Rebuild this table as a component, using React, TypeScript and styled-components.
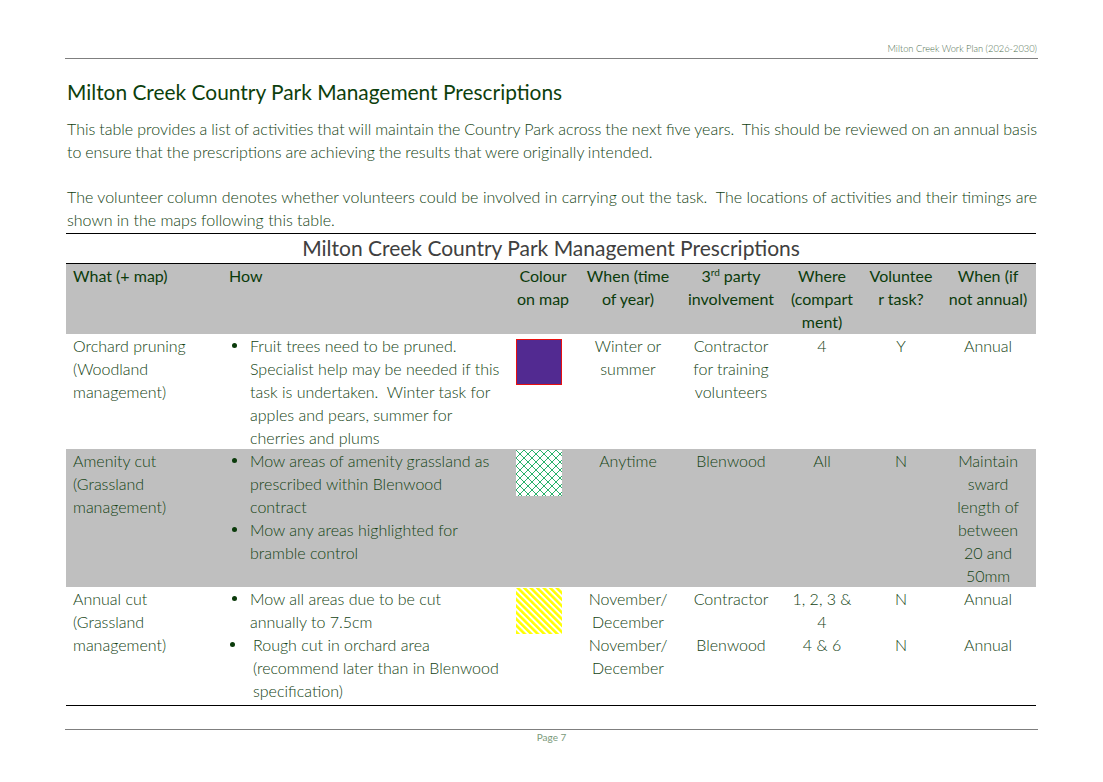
import React from 'react'
import styled, { createGlobalStyle } from 'styled-components'

const GlobalStyle = createGlobalStyle`
  html, body {
    margin: 0;
    padding: 0;
    background: #fff;
  }
  body {
    font-family: Lato, "Open Sans", sans-serif;
  }
`

const Page = styled.div`
  width: 1103px;
  height: 782px;
  box-sizing: border-box;
  padding: 43px 65px 0 65px;
  display: flex;
  flex-direction: column;
`

const RunningHead = styled.div`
  font-size: 9.3px;
  font-weight: 300;
  color: #4f6f4f;
  text-align: right;
  padding: 0 1px 4px 0;
  border-bottom: 1px solid #7f7f7f;
  line-height: 11px;
`

const Title = styled.h1`
  margin: 20px 0 0 2px;
  font-size: 20.9px;
  font-weight: 400;
  color: #0d3f0d;
  line-height: 26px;
`

const Para = styled.p`
  margin: ${props => props.$top || 0}px 1px 0 2px;
  font-size: 16px;
  font-weight: 300;
  line-height: 23px;
  color: #124212;
  text-align: justify;
  word-spacing: ${props => props.$tight ? '-0.5px' : 'normal'};
`

const Table = styled.table`
  margin: 2px 0 0 1px;
  width: 970px;
  border-collapse: collapse;
  table-layout: fixed;
  border-top: 1px solid #000;
  border-bottom: 1px solid #000;
`

const Caption = styled.th`
  font-size: 21px;
  font-weight: 400;
  color: #404040;
  text-align: center;
  line-height: 28px;
  padding: 0 0 1px 0;
  border-bottom: 1px solid #000;
`

const HeadCell = styled.th`
  background: #bfbfbf;
  font-size: 16px;
  font-weight: 400;
  color: #0b3b0b;
  line-height: 23px;
  text-align: ${props => props.$align || 'center'};
  vertical-align: top;
  padding: 0 ${props => props.$align === 'left' ? '2px 0 7px' : '0'};
  height: 70px;
`

const Row = styled.tr`
  background: ${props => props.$shaded ? '#bfbfbf' : '#fff'};
`

const Cell = styled.td`
  font-size: 16px;
  font-weight: 300;
  color: #124212;
  line-height: 23px;
  text-align: ${props => props.$align || 'center'};
  vertical-align: top;
  padding: 0 ${props => props.$align === 'left' ? '2px 0 7px' : '0'};
  height: ${props => props.$h}px;
`

const SwatchCell = styled.td`
  vertical-align: top;
  padding: 0 0 0 6px;
`

const Bullets = styled.ul`
  margin: 0;
  padding: 0;
  list-style: none;
`

const Bullet = styled.li`
  position: relative;
  padding-left: ${props => props.$indent || 21}px;
  white-space: nowrap;
  &::before {
    content: '';
    position: absolute;
    left: ${props => props.$dot ?? 3}px;
    top: 9px;
    width: 5px;
    height: 5px;
    border-radius: 50%;
    background: #0b3b0b;
  }
`

const Swatch = styled.div`
  width: 46px;
  height: 46px;
  margin-top: ${props => props.$top || 5}px;
  box-sizing: border-box;
  border: ${props => props.$border || 'none'};
  background: ${props => props.$fill || 'transparent'};
  svg {
    display: block;
  }
`

const Footer = styled.div`
  margin-top: 23px;
  border-top: 1px solid #7f7f7f;
  text-align: center;
  font-size: 10px;
  color: #7a9a7a;
  padding-top: 0;
  line-height: 14px;
`

const Sup = styled.sup`
  font-size: 10px;
  line-height: 0;
`

function CrossHatch() {
  return (
    <svg width="46" height="46" viewBox="0 0 46 46">
      <defs>
        <pattern id="xh" width="8" height="8" patternUnits="userSpaceOnUse">
          <rect width="8" height="8" fill="#fff" />
          <path d="M0 0 L8 8 M8 0 L0 8" stroke="#11a85a" strokeWidth="0.9" />
        </pattern>
      </defs>
      <rect width="46" height="46" fill="url(#xh)" />
    </svg>
  )
}

function Stripes() {
  return (
    <svg width="46" height="46" viewBox="0 0 46 46">
      <defs>
        <pattern id="st" width="4.6" height="8" patternUnits="userSpaceOnUse" patternTransform="rotate(-45)">
          <rect width="4.6" height="8" fill="#fff" />
          <rect width="2.6" height="8" fill="#ffff00" />
        </pattern>
      </defs>
      <rect width="46" height="46" fill="url(#st)" />
    </svg>
  )
}

export default function App() {
  return (
    <Page>
      <GlobalStyle />
      <RunningHead>Milton Creek Work Plan (2026-2030)</RunningHead>
      <Title>Milton Creek Country Park Management Prescriptions</Title>
      <Para $top={12} $tight>
        This table provides a list of activities that will maintain the Country Park across the next five years.&nbsp; This should be reviewed on an annual basis to ensure that the prescriptions are achieving the results that were originally intended.
      </Para>
      <Para $top={22}>
        The volunteer column denotes whether volunteers could be involved in carrying out the task.&nbsp; The locations of activities and their timings are shown in the maps following this table.
      </Para>
      <Table>
        <colgroup>
          <col style={{ width: 156 }} />
          <col style={{ width: 288 }} />
          <col style={{ width: 66 }} />
          <col style={{ width: 104 }} />
          <col style={{ width: 102 }} />
          <col style={{ width: 80 }} />
          <col style={{ width: 78 }} />
          <col style={{ width: 96 }} />
        </colgroup>
        <thead>
          <tr>
            <Caption colSpan={8}>Milton Creek Country Park Management Prescriptions</Caption>
          </tr>
          <tr>
            <HeadCell $align="left">What (+ map)</HeadCell>
            <HeadCell $align="left">How</HeadCell>
            <HeadCell>Colour<br />on map</HeadCell>
            <HeadCell>When (time<br />of year)</HeadCell>
            <HeadCell>3<Sup>rd</Sup> party<br />involvement</HeadCell>
            <HeadCell>Where<br />(compart<br />ment)</HeadCell>
            <HeadCell>Voluntee<br />r task?</HeadCell>
            <HeadCell>When (if<br />not annual)</HeadCell>
          </tr>
        </thead>
        <tbody>
          <Row>
            <Cell $align="left" $h={115}>Orchard pruning<br />(Woodland<br />management)</Cell>
            <Cell $align="left">
              <Bullets>
                <Bullet>
                  Fruit trees need to be pruned.<br />
                  Specialist help may be needed if this<br />
                  task is undertaken.&nbsp; Winter task for<br />
                  apples and pears, summer for<br />
                  cherries and plums
                </Bullet>
              </Bullets>
            </Cell>
            <SwatchCell><Swatch $fill="#522a91" $border="1px solid #e81010" /></SwatchCell>
            <Cell>Winter or<br />summer</Cell>
            <Cell>Contractor<br />for training<br />volunteers</Cell>
            <Cell>4</Cell>
            <Cell>Y</Cell>
            <Cell>Annual</Cell>
          </Row>
          <Row $shaded>
            <Cell $align="left" $h={138}>Amenity cut<br />(Grassland<br />management)</Cell>
            <Cell $align="left">
              <Bullets>
                <Bullet>Mow areas of amenity grassland as<br />prescribed within Blenwood<br />contract</Bullet>
                <Bullet>Mow any areas highlighted for<br />bramble control</Bullet>
              </Bullets>
            </Cell>
            <SwatchCell><Swatch $top={1}><CrossHatch /></Swatch></SwatchCell>
            <Cell>Anytime</Cell>
            <Cell>Blenwood</Cell>
            <Cell>All</Cell>
            <Cell>N</Cell>
            <Cell>Maintain<br />sward<br />length of<br />between<br />20 and<br />50mm</Cell>
          </Row>
          <Row>
            <Cell $align="left" $h={118}>Annual cut<br />(Grassland<br />management)</Cell>
            <Cell $align="left">
              <Bullets>
                <Bullet>Mow all areas due to be cut<br />annually to 7.5cm</Bullet>
                <Bullet $indent={24} $dot={1}>Rough cut in orchard area<br />(recommend later than in Blenwood<br />specification)</Bullet>
              </Bullets>
            </Cell>
            <SwatchCell><Swatch $top={1}><Stripes /></Swatch></SwatchCell>
            <Cell>November/<br />December<br />November/<br />December</Cell>
            <Cell>Contractor<br /><br />Blenwood</Cell>
            <Cell>1, 2, 3 &amp;<br />4<br />4 &amp; 6</Cell>
            <Cell>N<br /><br />N</Cell>
            <Cell>Annual<br /><br />Annual</Cell>
          </Row>
        </tbody>
      </Table>
      <Footer>Page 7</Footer>
    </Page>
  )
}
